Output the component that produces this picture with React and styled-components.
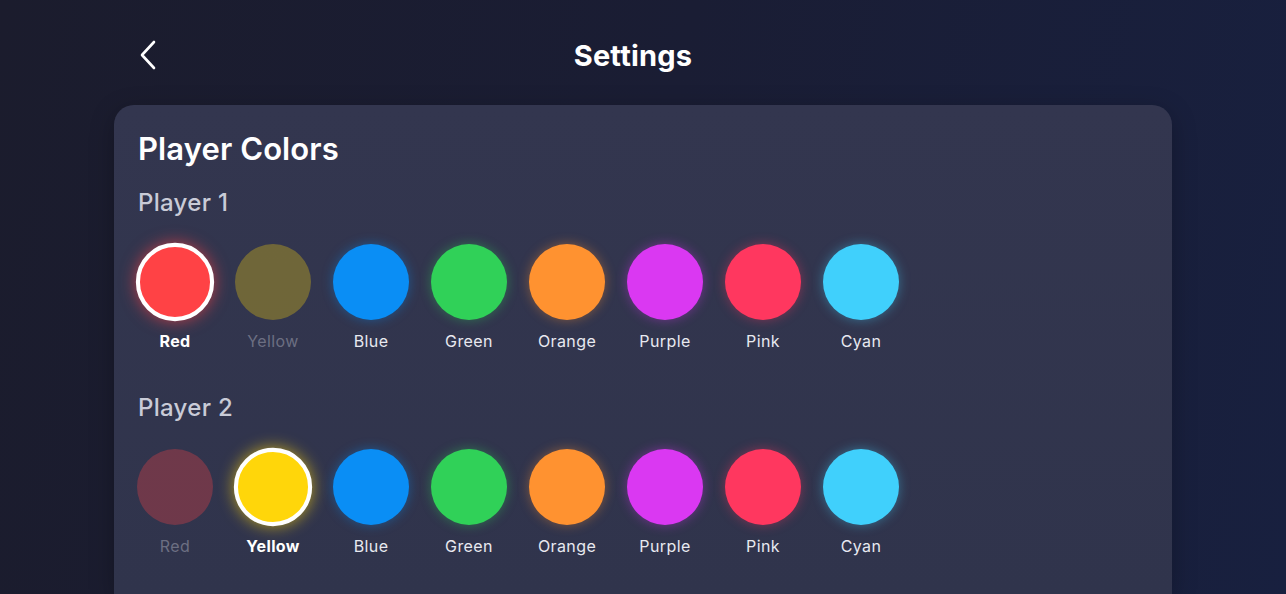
import React from "react";
import styled, { createGlobalStyle } from "styled-components";

const GlobalStyle = createGlobalStyle`
  html, body {
    margin: 0;
    padding: 0;
    height: 100%;
    overflow: hidden;
  }
  body {
    font-family: Inter, "Noto Sans", "Liberation Sans", sans-serif;
    background: #1a1c2e;
  }
`;

const COLORS = [
  { name: "Red", hex: "#ff4245" },
  { name: "Yellow", hex: "#ffd60a" },
  { name: "Blue", hex: "#0a8ef5" },
  { name: "Green", hex: "#30d158" },
  { name: "Orange", hex: "#ff9230" },
  { name: "Purple", hex: "#da38f2" },
  { name: "Pink", hex: "#ff375f" },
  { name: "Cyan", hex: "#40d0fc" },
];

const Page = styled.div`
  width: 1286px;
  height: 594px;
  overflow: hidden;
  background: linear-gradient(100deg, #1b1c2d 0%, #1a1d34 50%, #18203f 100%);
  display: flex;
  flex-direction: column;
  color: #fff;
`;

const Header = styled.header`
  height: 105px;
  box-sizing: border-box;
  padding: 0 156px 0 136px;
  display: grid;
  grid-template-columns: 1fr auto 1fr;
  align-items: center;
`;

const BackButton = styled.button`
  justify-self: start;
  background: none;
  border: none;
  padding: 0;
  width: 24px;
  height: 32px;
  display: flex;
  align-items: center;
  justify-content: center;
  cursor: pointer;
  margin-top: 5px;
`;

const Title = styled.h1`
  margin: 0;
  margin-top: 5px;
  font-size: 29px;
  font-weight: 700;
  letter-spacing: 0.2px;
  color: #fff;
`;

const Card = styled.section`
  margin: 0 114px;
  flex: 1;
  background: linear-gradient(180deg, #33364f 0%, #30344c 100%);
  border-radius: 20px 20px 0 0;
  padding: 26px 24px 0 23px;
  box-shadow: 0 6px 24px rgba(0, 0, 0, 0.25);
`;

const CardTitle = styled.h2`
  margin: 0;
  font-size: 31px;
  line-height: 36px;
  font-weight: 600;
  letter-spacing: 0.1px;
  color: #fff;
  padding-left: 1px;
`;

const PlayerTitle = styled.h3`
  margin: 0;
  font-size: 24px;
  line-height: 28px;
  font-weight: 500;
  letter-spacing: 0.3px;
  color: #c9cbd7;
  margin-top: ${(p) => p.$top}px;
  padding-left: 1px;
`;

const Swatches = styled.div`
  display: flex;
  gap: 22px;
  margin-top: 27px;
`;

const Swatch = styled.div`
  width: 76px;
  display: flex;
  flex-direction: column;
  align-items: center;
  gap: 11px;
`;

const Circle = styled.div`
  width: 76px;
  height: 76px;
  border-radius: 50%;
  box-sizing: border-box;
  background: ${(p) => p.$color};
  opacity: ${(p) => (p.$disabled ? 0.3 : 1)};
  border: ${(p) => (p.$selected ? "4px solid #fff" : "none")};
  box-shadow: ${(p) =>
    p.$disabled
      ? "none"
      : p.$selected
      ? `0 0 16px ${p.$color}aa`
      : `0 0 12px ${p.$color}66`};
  transform: ${(p) => (p.$selected ? "scale(1.03)" : "none")};
`;

const Label = styled.span`
  font-size: 16px;
  line-height: 20px;
  font-weight: ${(p) => (p.$selected ? 700 : 400)};
  color: ${(p) =>
    p.$selected ? "#ffffff" : p.$disabled ? "#6c6f82" : "#e8e9f0"};
  letter-spacing: 0.4px;
`;

function ColorRow({ selected, disabled }) {
  return (
    <Swatches>
      {COLORS.map((c) => {
        const isSel = c.name === selected;
        const isDis = c.name === disabled;
        return (
          <Swatch key={c.name}>
            <Circle $color={c.hex} $selected={isSel} $disabled={isDis} />
            <Label $selected={isSel} $disabled={isDis}>
              {c.name}
            </Label>
          </Swatch>
        );
      })}
    </Swatches>
  );
}

export default function App() {
  return (
    <>
      <GlobalStyle />
      <Page>
        <Header>
          <BackButton aria-label="Back">
            <svg width="20" height="30" viewBox="0 0 20 30" fill="none">
              <path
                d="M16 2 L4 15 L16 28"
                stroke="#fff"
                strokeWidth="2.6"
                strokeLinecap="round"
                strokeLinejoin="round"
              />
            </svg>
          </BackButton>
          <Title>Settings</Title>
          <div />
        </Header>
        <Card>
          <CardTitle>Player Colors</CardTitle>
          <PlayerTitle $top={22}>Player 1</PlayerTitle>
          <ColorRow selected="Red" disabled="Yellow" />
          <PlayerTitle $top={43}>Player 2</PlayerTitle>
          <ColorRow selected="Yellow" disabled="Red" />
        </Card>
      </Page>
    </>
  );
}
